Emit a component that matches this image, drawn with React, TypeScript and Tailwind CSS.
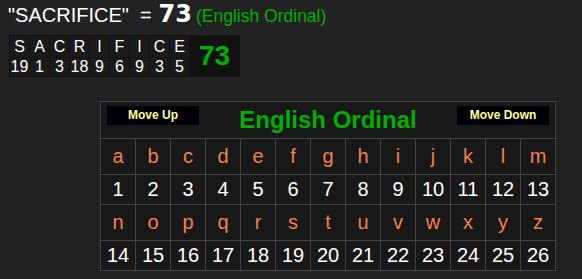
export default function App() {
  const word = ["S", "A", "C", "R", "I", "F", "I", "C", "E"];
  const vals = [19, 1, 3, 18, 9, 6, 9, 3, 5];
  const row1 = "abcdefghijklm".split("");
  const row2 = "nopqrstuvwxyz".split("");
  const cellL = "border border-[#444] w-[35px] h-[36px] p-0 text-center align-middle text-[20px] leading-[23px] text-[#f0824a]";
  const cellN = "border border-[#444] w-[35px] h-[30px] p-0 text-center align-middle text-[20px] leading-[23px] text-white";
  return (
    <div className="min-h-[279px] w-[582px] bg-[#222] font-['Liberation_Sans',Arial,sans-serif] leading-[1.15] pt-[1px] pl-[8px]">
      <div className="flex items-baseline whitespace-nowrap">
        <span className="text-[20px] text-white">"SACRIFICE"</span>
        <span className="text-[20px] text-white ml-[11px]">=</span>
        <span className="text-[24px] font-bold text-white ml-[7px] font-['DejaVu_Sans',Verdana,sans-serif]">73</span>
        <span className="text-[17.5px] text-[#00b000] ml-[4px]">(English Ordinal)</span>
      </div>
      <table className="mt-[6px] ml-[1px] border-separate border-spacing-[1px] bg-[#111]">
        <tbody>
          <tr>
            {word.map((c, i) => (
              <td key={i} className="bg-[#1a1a1a] h-[21px] w-[19px] p-0 text-center text-[16px] leading-[21px] text-white">
                {c}
              </td>
            ))}
            <td rowSpan={2} className="bg-[#111] w-[49px] p-0 text-center align-middle text-[28px] leading-[32px] font-bold text-[#00b000]">
              73
            </td>
          </tr>
          <tr>
            {vals.map((v, i) => (
              <td key={i} className="bg-[#1a1a1a] h-[18px] w-[19px] p-0 text-center text-[16px] leading-[18px] text-white">
                {v}
              </td>
            ))}
          </tr>
        </tbody>
      </table>
      <table className="mt-[24px] ml-[92px] border-collapse bg-[#181818]">
        <tbody>
          <tr>
            <td colSpan={13} className="border border-[#444] h-[37px] p-0 align-top">
              <div className="flex justify-between items-start px-[6px] pt-[4px]">
                <div className="w-[92px] h-[19px] bg-[#000008] flex items-center justify-center text-[12px] leading-[14px] font-bold text-[#ffff99]">
                  Move Up
                </div>
                <div className="text-[24px] font-bold text-[#00b000] leading-[27px]">English Ordinal</div>
                <div className="w-[92px] h-[19px] bg-[#000008] flex items-center justify-center text-[12px] leading-[14px] font-bold text-[#ffff99]">
                  Move Down
                </div>
              </div>
            </td>
          </tr>
          <tr>
            {row1.map((c) => (
              <td key={c} className={cellL}>{c}</td>
            ))}
          </tr>
          <tr>
            {row1.map((c, i) => (
              <td key={c} className={cellN}>{i + 1}</td>
            ))}
          </tr>
          <tr>
            {row2.map((c) => (
              <td key={c} className={cellL}>{c}</td>
            ))}
          </tr>
          <tr>
            {row2.map((c, i) => (
              <td key={c} className={cellN}>{i + 14}</td>
            ))}
          </tr>
        </tbody>
      </table>
    </div>
  );
}
